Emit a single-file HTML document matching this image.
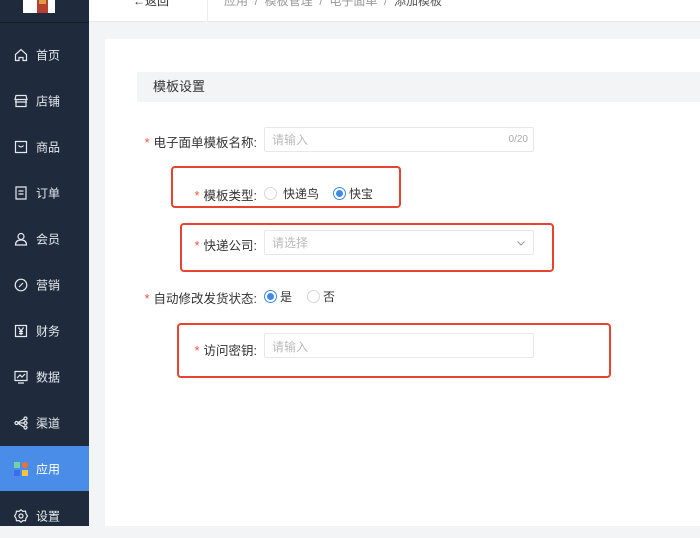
<!DOCTYPE html><html><head><meta charset="utf-8"><style>
*{margin:0;padding:0;box-sizing:border-box}
body{width:700px;height:526px;overflow:hidden;background:#f3f4f6;font-family:"Liberation Sans","Noto Sans CJK SC",sans-serif;position:relative;font-size:12px;color:#333}
.a{position:absolute}
.side{left:0;top:0;width:89px;height:526px;background:#1f2b3c}
.it{position:absolute;left:0;width:89px;height:45px;color:#e6e9ee;font-size:12px}
.it span{position:absolute;left:36px;top:50%;transform:translateY(-50%)}
.it svg{position:absolute;left:14px;top:50%;transform:translateY(-50%)}
.lab{position:absolute;text-align:right;font-size:12.5px;color:#333}
.lab b{color:#f0563a;font-weight:normal;margin-right:4px}
.inp{position:absolute;border:1px solid #e8e8e8;border-radius:2px;background:#fff;color:#bbb;font-size:12px;padding-left:7px;line-height:25px}
.rb{position:absolute;border:2px solid #e8432e;border-radius:4px}
.ra{position:absolute;width:13px;height:13px;border-radius:50%;border:1px solid #d6d6d6;background:#fff}
.ra.on{border:1px solid #3f8ae6}
.ra.on:after{content:"";position:absolute;left:2px;top:2px;width:7px;height:7px;border-radius:50%;background:#3f8ae6}
</style></head><body>
<div class="a side">
<div class="a" style="left:23px;top:0;width:32px;height:13px;background:#fff"></div>
<div class="a" style="left:37px;top:0;width:11px;height:13px;background:#b84030"></div>
<div class="a" style="left:39px;top:0;width:7px;height:4px;background:#d8a040"></div>
<div class="a" style="left:0;top:22px;width:89px;height:1px;background:#111a26"></div>
<div class="it" style="top:32px"><svg width="14" height="14" viewBox="0 0 14 14" fill="none" stroke="#e6e9ee" stroke-width="1.2"><path d="M1.5 6.5 7 1.5l5.5 5V12.5h-3.5v-3h-4v3H1.5z"/></svg><span>首页</span></div>
<div class="it" style="top:78px"><svg width="14" height="14" viewBox="0 0 14 14" fill="none" stroke="#e6e9ee" stroke-width="1.2"><path d="M2 1.5h10l1 4H1zM2 5.5v7h10v-7M1 8h12"/></svg><span>店铺</span></div>
<div class="it" style="top:124px"><svg width="14" height="14" viewBox="0 0 14 14" fill="none" stroke="#e6e9ee" stroke-width="1.2"><path d="M1.5 1.5h11v11h-11zM4.5 5.5q2.5 3 5 0"/></svg><span>商品</span></div>
<div class="it" style="top:170px"><svg width="14" height="14" viewBox="0 0 14 14" fill="none" stroke="#e6e9ee" stroke-width="1.2"><path d="M2 1h10v12H2zM4.5 5h5M4.5 8h5"/></svg><span>订单</span></div>
<div class="it" style="top:216px"><svg width="14" height="14" viewBox="0 0 14 14" fill="none" stroke="#e6e9ee" stroke-width="1.2"><circle cx="7" cy="4.5" r="3"/><path d="M1.5 13q0-5 5.5-5t5.5 5z"/></svg><span>会员</span></div>
<div class="it" style="top:262px"><svg width="14" height="14" viewBox="0 0 14 14" fill="none" stroke="#e6e9ee" stroke-width="1.2"><circle cx="7" cy="7" r="5.8"/><path d="M5 9l4-4M5 5.5h.1M9 8.5h.1"/></svg><span>营销</span></div>
<div class="it" style="top:308px"><svg width="14" height="14" viewBox="0 0 14 14" fill="none" stroke="#e6e9ee" stroke-width="1.2"><path d="M1.5 1.5h11v11h-11zM4.5 3.5 7 7l2.5-3.5M7 7v4M5 7.5h4M5 9.5h4"/></svg><span>财务</span></div>
<div class="it" style="top:354px"><svg width="14" height="14" viewBox="0 0 14 14" fill="none" stroke="#e6e9ee" stroke-width="1.2"><path d="M1 1.5h12v9H1zM4 13h6M3 8l3-3 2 2 3-3"/></svg><span>数据</span></div>
<div class="it" style="top:400px"><svg width="14" height="14" viewBox="0 0 14 14" fill="none" stroke="#e6e9ee" stroke-width="1.2"><circle cx="2.5" cy="7" r="1.5"/><circle cx="11.5" cy="2.5" r="1.5"/><circle cx="11.5" cy="7" r="1.5"/><circle cx="11.5" cy="11.5" r="1.5"/><path d="M4 7h6M4 6.5 10 3M4 7.5l6 3.5"/></svg><span>渠道</span></div>
<div class="it" style="top:446px;background:#4a8de8;color:#fff"><svg width="14" height="14" viewBox="0 0 14 14"><rect x="0" y="0" width="6" height="6" fill="#6fd3a6"/><circle cx="11" cy="3" r="3" fill="#f07030"/><rect x="0" y="8" width="6" height="6" fill="#3d6cf0"/><rect x="8" y="8" width="6" height="6" fill="#f5c542"/></svg><span>应用</span></div>
<div class="it" style="top:493px"><svg width="14" height="14" viewBox="0 0 14 14" fill="none" stroke="#e6e9ee" stroke-width="1.2"><path d="M7 .8l2 1.6 2.5-.2.5 2.5L13.5 7 12 9.2l-.5 2.5-2.5-.2L7 13.2 5 11.5l-2.5.2L2 9.2.5 7 2 4.7l.5-2.5L5 2.4z"/><circle cx="7" cy="7" r="2"/></svg><span>设置</span></div>
</div>
<div class="a" style="left:89px;top:0;width:611px;height:22px;background:#fff;border-bottom:1px solid #e8e8e8"></div>
<div class="a" style="left:207px;top:0;width:1px;height:22px;background:#ececec"></div>
<div class="a" style="left:133px;top:-8px;font-size:12px;color:#333">←返回</div>
<div class="a" style="left:224px;top:-8px;font-size:12px;color:#999">应用 &nbsp;/&nbsp; 模板管理 &nbsp;/&nbsp; 电子面单 &nbsp;/&nbsp; <span style="color:#555">添加模板</span></div>
<div class="a" style="left:105px;top:39px;width:595px;height:487px;background:#fff"></div>
<div class="a" style="left:137px;top:72px;width:563px;height:30px;background:#f3f4f6;font-size:13px;line-height:30px;padding-left:16px;color:#333">模板设置</div>
<div class="lab" style="left:100px;width:157px;top:132px"><b>*</b>电子面单模板名称:</div>
<div class="inp" style="left:264px;top:127px;width:270px;height:25px;line-height:24px">请输入<span style="position:absolute;right:5px;color:#aaa;font-size:10px">0/20</span></div>
<div class="rb" style="left:171px;top:166px;width:230px;height:42px"></div>
<div class="lab" style="left:150px;width:107px;top:185px"><b>*</b>模板类型:</div>
<div class="ra" style="left:264px;top:187px"></div><div class="a" style="left:283px;top:185px">快递鸟</div>
<div class="ra on" style="left:333px;top:187px"></div><div class="a" style="left:349px;top:185px">快宝</div>
<div class="rb" style="left:180px;top:223px;width:374px;height:49px"></div>
<div class="lab" style="left:150px;width:107px;top:235px"><b>*</b>快递公司:</div>
<div class="inp" style="left:264px;top:230px;width:270px;height:25px;line-height:24px">请选择<svg style="position:absolute;right:8px;top:10px" width="8" height="5" viewBox="0 0 8 5" fill="none" stroke="#999"><path d="M.5.5 4 4 7.5.5"/></svg></div>
<div class="lab" style="left:100px;width:157px;top:288px"><b>*</b>自动修改发货状态:</div>
<div class="ra on" style="left:264px;top:290px"></div><div class="a" style="left:280px;top:288px">是</div>
<div class="ra" style="left:307px;top:290px"></div><div class="a" style="left:323px;top:288px">否</div>
<div class="rb" style="left:177px;top:323px;width:434px;height:55px"></div>
<div class="lab" style="left:150px;width:107px;top:340px"><b>*</b>访问密钥:</div>
<div class="inp" style="left:264px;top:333px;width:270px;height:25px;line-height:26px">请输入</div>
</body></html>
